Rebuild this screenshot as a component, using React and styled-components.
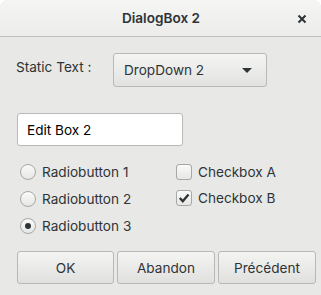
import React from "react";
import styled, { createGlobalStyle } from "styled-components";

const Global = createGlobalStyle`
  html, body { margin: 0; padding: 0; background: #ffffff; }
  body { font-family: Inter, "Noto Sans", sans-serif; color: #2e3436; }
  * { box-sizing: border-box; }
`;

const Window = styled.div`
  width: 321px;
  height: 295px;
  background: #e8e8e7;
  border-radius: 8px 8px 0 0;
  overflow: hidden;
  display: flex;
  flex-direction: column;
  font-size: 13.6px;
`;

const TitleBar = styled.div`
  height: 37px;
  flex: none;
  background: linear-gradient(#f5f5f4, #ececeb);
  border-bottom: 1px solid #bfbfbc;
  display: flex;
  align-items: center;
  justify-content: center;
  position: relative;
  font-weight: 600;
  font-size: 13.6px;
  color: #2e3436;
  padding-left: 1px;
`;

const CloseBtn = styled.div`
  position: absolute;
  right: 14px;
  top: 14px;
  width: 10px;
  height: 10px;
  display: flex;
`;

const Body = styled.div`
  display: flex;
  flex-direction: column;
  padding: 16px 5px 0 16px;
`;

const TopRow = styled.div`
  display: flex;
  align-items: center;
  height: 34px;
`;

const Label = styled.div`
  width: 97px;
  margin-top: -6px;
`;

const Dropdown = styled.div`
  width: 154px;
  height: 34px;
  border: 1px solid #b8b8b5;
  border-radius: 3px;
  background: linear-gradient(#f4f4f3, #e2e2e0);
  display: flex;
  align-items: center;
  justify-content: space-between;
  padding: 0 14px 0 10px;
`;

const Arrow = styled.div`
  width: 0;
  height: 0;
  border-left: 5px solid transparent;
  border-right: 5px solid transparent;
  border-top: 5px solid #2e3436;
  margin-top: 1px;
`;

const EditBox = styled.div`
  margin-top: 26px;
  margin-left: 1px;
  width: 166px;
  height: 33px;
  background: #ffffff;
  border: 1px solid #b8b8b5;
  border-radius: 3px;
  display: flex;
  align-items: center;
  padding-left: 9px;
  color: #000;
`;

const OptionsWrap = styled.div`
  margin-top: 12px;
  display: flex;
  padding-left: 4px;
`;

const Column = styled.div`
  display: flex;
  flex-direction: column;
  width: ${p => (p.$w ? `${p.$w}px` : "auto")};
`;

const OptRow = styled.div`
  height: ${p => p.$h}px;
  display: flex;
  align-items: center;
  gap: 6px;
`;

const Radio = styled.div`
  width: 16px;
  height: 16px;
  border-radius: 50%;
  border: 1px solid #a7a7a4;
  background: linear-gradient(#fafafa, #e6e6e4);
  display: flex;
  align-items: center;
  justify-content: center;
  flex: none;
  &::after {
    content: "";
    display: ${p => (p.$on ? "block" : "none")};
    width: 6px;
    height: 6px;
    border-radius: 50%;
    background: #2e3436;
  }
`;

const Check = styled.div`
  width: 16px;
  height: 16px;
  border-radius: 3px;
  border: 1px solid #a7a7a4;
  background: linear-gradient(#fafafa, #e6e6e4);
  display: flex;
  align-items: center;
  justify-content: center;
  flex: none;
`;

const Buttons = styled.div`
  margin-top: 12px;
  margin-left: 1px;
  display: flex;
  gap: 3px;
`;

const Button = styled.div`
  width: ${p => p.$w}px;
  height: 33px;
  border: 1px solid #b8b8b5;
  border-radius: 3px;
  background: linear-gradient(#f4f4f3, #e0e0de);
  display: flex;
  align-items: center;
  justify-content: center;
`;

export default function App() {
  return (
    <>
      <Global />
      <Window>
        <TitleBar>
          DialogBox 2
          <CloseBtn>
            <svg width="10" height="10" viewBox="0 0 10 10">
              <path d="M1.5 1.5 L8.5 8.5 M8.5 1.5 L1.5 8.5" stroke="#2e3436" strokeWidth="2" />
            </svg>
          </CloseBtn>
        </TitleBar>
        <Body>
          <TopRow>
            <Label>Static Text :</Label>
            <Dropdown>
              <span>DropDown 2</span>
              <Arrow />
            </Dropdown>
          </TopRow>
          <EditBox>Edit Box 2</EditBox>
          <OptionsWrap>
            <Column $w={156}>
              <OptRow $h={27}><Radio />Radiobutton 1</OptRow>
              <OptRow $h={27}><Radio />Radiobutton 2</OptRow>
              <OptRow $h={27}><Radio $on />Radiobutton 3</OptRow>
            </Column>
            <Column>
              <OptRow $h={27}><Check />Checkbox A</OptRow>
              <OptRow $h={26}>
                <Check>
                  <svg width="12" height="12" viewBox="0 0 12 12">
                    <path d="M1.8 6 L4.8 9.2 L10.5 2.5" fill="none" stroke="#2e3436" strokeWidth="2.4" />
                  </svg>
                </Check>
                Checkbox B
              </OptRow>
            </Column>
          </OptionsWrap>
          <Buttons>
            <Button $w={97}>OK</Button>
            <Button $w={98}>Abandon</Button>
            <Button $w={98}>Précédent</Button>
          </Buttons>
        </Body>
      </Window>
    </>
  );
}
